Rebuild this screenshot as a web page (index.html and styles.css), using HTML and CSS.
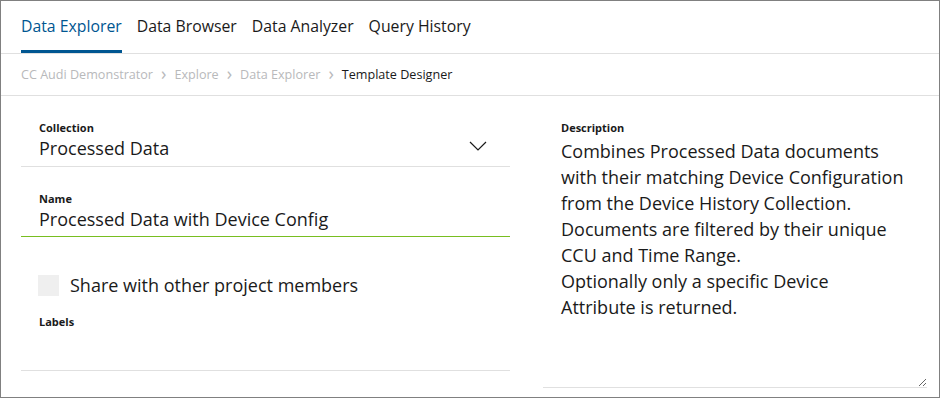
FILE: index.html
```html
<!DOCTYPE html>
<html>
<head>
  <meta charset="UTF-8">
  <title>Template Designer</title>
  <link rel="stylesheet" href="styles.css">
</head>
<body>
  <div class="frame">
    <nav class="tabs">
      <a class="tab active">Data Explorer</a>
      <a class="tab">Data Browser</a>
      <a class="tab">Data Analyzer</a>
      <a class="tab">Query History</a>
    </nav>

    <div class="crumbs">
      <span class="crumb">CC Audi Demonstrator</span>
      <span class="sep">&#x203A;</span>
      <span class="crumb">Explore</span>
      <span class="sep">&#x203A;</span>
      <span class="crumb">Data Explorer</span>
      <span class="sep">&#x203A;</span>
      <span class="crumb current">Template Designer</span>
    </div>

    <div class="content">
      <div class="col left">
        <div class="field select">
          <div class="label">Collection</div>
          <div class="value">Processed Data</div>
          <svg class="chevron" width="18" height="10" viewBox="0 0 18 10">
            <polyline points="1,1 9,9 17,1" fill="none" stroke="#1a1a1a" stroke-width="1.2"/>
          </svg>
        </div>

        <div class="field name">
          <div class="label">Name</div>
          <div class="value">Processed Data with Device Config</div>
        </div>

        <label class="check">
          <span class="box"></span>
          <span>Share with other project members</span>
        </label>

        <div class="field labels">
          <div class="label">Labels</div>
        </div>
      </div>

      <div class="col right">
        <div class="label desc-label">Description</div>
        <textarea class="desc" wrap="off">Combines Processed Data documents
with their matching Device Configuration
from the Device History Collection.
Documents are filtered by their unique
CCU and Time Range.
Optionally only a specific Device
Attribute is returned.</textarea>
      </div>
    </div>
  </div>
</body>
</html>
```

FILE: styles.css
```css
body {
  margin: 0;
  background: #fff;
  font-family: "Open Sans", "Noto Sans", sans-serif;
  color: #1a1a1a;
}

.frame {
  width: 940px;
  height: 398px;
  box-sizing: border-box;
  border: 1px solid #808080;
  overflow: hidden;
}

/* top tabs */
.tabs {
  display: flex;
  gap: 15px;
  height: 52px;
  padding-left: 20px;
  border-bottom: 1px solid #e0e0e0;
}

.tab {
  box-sizing: border-box;
  height: 52px;
  padding-top: 14px;
  font-size: 15.8px;
  line-height: 22px;
  color: #1a1a1a;
  border-bottom: 3px solid transparent;
}

.tab.active {
  color: #005691;
  border-bottom-color: #005691;
}

/* breadcrumb */
.crumbs {
  display: flex;
  align-items: center;
  gap: 8px;
  height: 41px;
  padding-left: 20px;
  border-bottom: 1px solid #e0e0e0;
  font-size: 12.6px;
  color: #b8b9bb;
}

.sep {
  font-size: 18px;
  line-height: 17px;
  margin-top: -2px;
}

.crumb.current {
  color: #1a1a1a;
}

/* form */
.content {
  display: flex;
  gap: 33px;
  padding-left: 20px;
}

.col.left {
  width: 489px;
}

.col.right {
  width: 384px;
}

.label {
  font-size: 11px;
  font-weight: 700;
  line-height: 14px;
}

.field {
  position: relative;
  padding: 0 18px;
  border-bottom: 1px solid #e0e0e0;
}

.field .value {
  font-size: 18px;
  line-height: 26px;
}

.field.select {
  margin-top: 25px;
  padding-bottom: 5px;
}

.chevron {
  position: absolute;
  right: 23px;
  top: 20px;
}

.field.name {
  margin-top: 25px;
  padding-bottom: 4px;
  border-bottom-color: #78be20;
}

.check {
  display: flex;
  align-items: center;
  gap: 11px;
  margin-top: 38px;
  padding-left: 17px;
  font-size: 18px;
  line-height: 21px;
}

.box {
  width: 21px;
  height: 21px;
  background: #efefef;
}

.field.labels {
  margin-top: 19px;
  height: 56px;
  box-sizing: border-box;
}

.desc-label {
  margin-top: 25px;
  padding-left: 18px;
}

.desc {
  display: block;
  width: 384px;
  height: 250px;
  box-sizing: border-box;
  margin: 3px 0 0;
  padding: 0 18px;
  border: none;
  border-bottom: 1px solid #e0e0e0;
  outline: none;
  resize: vertical;
  overflow: hidden;
  font-family: inherit;
  font-size: 18px;
  line-height: 26px;
  color: #1a1a1a;
}
```
